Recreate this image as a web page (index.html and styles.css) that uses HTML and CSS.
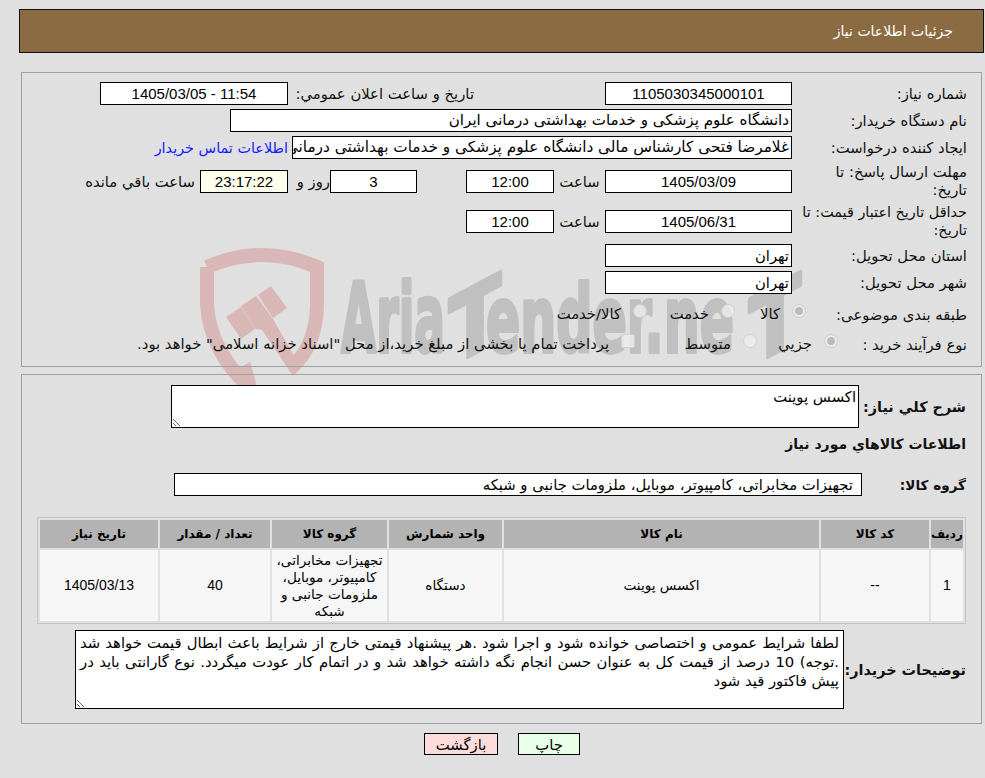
FILE: index.html
```html
<!DOCTYPE html>
<html lang="fa" dir="rtl">
<head>
<meta charset="utf-8">
<title>جزئیات اطلاعات نیاز</title>
<link rel="stylesheet" href="styles.css">
</head>
<body>
<svg class="watermark" width="985" height="400" viewBox="0 0 985 400" aria-hidden="true">
  <g class="wm-red">
    <path class="wm-shield" d="M207 267 Q262 243 317 267 L317 305 Q316 345 293 366"/>
    <path class="wm-shield" d="M207 267 L207 305 Q210 350 248 386"/>
    <polygon points="226,317 241,307 255,329 241,339"/>
    <polygon points="241,306 256,296 273,319 301,368 293,376 262,330 255,329"/>
    <polygon points="258,295 271,286 287,308 273,318"/>
    <polygon points="232,372 250,362 257,386 238,386"/>
  </g>
  <g class="wm-grey">
    <text x="341" y="352" font-size="96" textLength="104" lengthAdjust="spacingAndGlyphs">Aria</text>
    <text font-size="93" textLength="52" lengthAdjust="spacingAndGlyphs" transform="translate(449 367) skewY(-28)">T</text>
    <text x="486" y="352" font-size="92" textLength="248" lengthAdjust="spacingAndGlyphs">ender.ne</text>
    <text font-size="93" textLength="52" lengthAdjust="spacingAndGlyphs" transform="translate(749 367) skewY(-28)">T</text>
  </g>
</svg>

<header class="page-title">جزئیات اطلاعات نیاز</header>

<section class="panel panel-info">
  <div class="row">
    <div class="label">شماره نیاز:</div>
    <div class="field w187 num center">1105030345000101</div>
    <div class="label-inline announce">تاریخ و ساعت اعلان عمومي:</div>
    <div class="field w188 num center ltr">1405/03/05 - 11:54</div>
  </div>
  <div class="row">
    <div class="label">نام دستگاه خریدار:</div>
    <div class="field w562">دانشگاه علوم پزشکی و خدمات بهداشتی درمانی ایران</div>
  </div>
  <div class="row">
    <div class="label">ایجاد کننده درخواست:</div>
    <div class="field w500">غلامرضا فتحی کارشناس مالی دانشگاه علوم پزشکی و خدمات بهداشتی درمانی ایران</div>
    <a class="contact" href="#">اطلاعات تماس خریدار</a>
  </div>
  <div class="row row-tall">
    <div class="label label-two">مهلت ارسال پاسخ: تا<br>تاریخ:</div>
    <div class="field w187 num center">1405/03/09</div>
    <div class="hour-label">ساعت</div>
    <div class="field w88 num center">12:00</div>
    <div class="field w87 num center gap-days">3</div>
    <div class="label-inline days">روز و</div>
    <div class="field w88 num center clock">23:17:22</div>
    <div class="label-inline remain">ساعت باقي مانده</div>
  </div>
  <div class="row row-tall">
    <div class="label label-two label-long">حداقل تاریخ اعتبار قیمت: تا<br>تاریخ:</div>
    <div class="field w187 num center">1405/06/31</div>
    <div class="hour-label">ساعت</div>
    <div class="field w88 num center">12:00</div>
  </div>
  <div class="row row-city">
    <div class="label">استان محل تحویل:</div>
    <div class="field w187">تهران</div>
  </div>
  <div class="row">
    <div class="label">شهر محل تحویل:</div>
    <div class="field w187">تهران</div>
  </div>
  <div class="row row-choice">
    <div class="label">طبقه بندی موضوعی:</div>
    <div class="choices">
      <span class="choice c-goods"><i class="radio on"></i><span>کالا</span></span>
      <span class="choice c-service"><i class="radio"></i><span>خدمت</span></span>
      <span class="choice c-both"><i class="radio"></i><span>کالا/خدمت</span></span>
    </div>
  </div>
  <div class="row row-choice row-process">
    <div class="label">نوع فرآیند خرید :</div>
    <div class="choices">
      <span class="choice c-small"><i class="radio on"></i><span>جزيي</span></span>
      <span class="choice c-mid"><i class="radio"></i><span>متوسط</span></span>
      <span class="choice c-pay"><i class="check"></i><span>پرداخت تمام یا بخشی از مبلغ خرید،از محل "اسناد خزانه اسلامی" خواهد بود.</span></span>
    </div>
  </div>
</section>

<section class="panel panel-need">
  <div class="need-row">
    <div class="strong need-label">شرح کلي نیاز:</div>
    <textarea class="area area-short" readonly>اکسس پوینت</textarea>
  </div>
  <div class="strong goods-title">اطلاعات کالاهاي مورد نیاز</div>
  <div class="need-row group-row">
    <div class="strong group-label">گروه کالا:</div>
    <div class="field group-field">تجهیزات مخابراتی، کامپیوتر، موبایل، ملزومات جانبی و شبکه</div>
  </div>
  <table class="items">
    <colgroup>
      <col class="c1"><col class="c2"><col class="c3"><col class="c4"><col class="c5"><col class="c6"><col class="c7">
    </colgroup>
    <thead>
      <tr><th>ردیف</th><th>کد کالا</th><th>نام کالا</th><th>واحد شمارش</th><th>گروه کالا</th><th>تعداد / مقدار</th><th>تاریخ نیاز</th></tr>
    </thead>
    <tbody>
      <tr>
        <td class="num">1</td>
        <td class="num">--</td>
        <td>اکسس پوینت</td>
        <td>دستگاه</td>
        <td>تجهیزات مخابراتی، کامپیوتر، موبایل، ملزومات جانبی و شبکه</td>
        <td class="num">40</td>
        <td class="num">1405/03/13</td>
      </tr>
    </tbody>
  </table>
  <div class="need-row note-row">
    <div class="strong note-label">توضیحات خریدار:</div>
    <textarea class="area area-note" readonly>لطفا شرایط عمومی و اختصاصی خوانده شود و اجرا شود .هر پیشنهاد قیمتی خارج از شرایط باعث ابطال قیمت خواهد شد .توجه) 10 درصد از قیمت کل به عنوان حسن انجام نگه داشته خواهد شد و در اتمام کار عودت میگردد. نوع گارانتی باید در پیش فاکتور قید شود</textarea>
  </div>
</section>

<div class="actions">
  <button class="btn btn-print" type="button">چاپ</button>
  <button class="btn btn-back" type="button">بازگشت</button>
</div>
</body>
</html>
```

FILE: styles.css
```css
* { box-sizing: border-box; }
html, body { margin: 0; padding: 0; }
body {
  background: #e0e0e0;
  color: #111;
  font-family: "DejaVu Sans", sans-serif;
  font-size: 14.8px;
  height: 778px;
  overflow: hidden;
  position: relative;
}
.watermark { position: absolute; left: 0; top: 0; z-index: -1; direction: ltr; }
.wm-red polygon { fill: #d9b7b7; }
.wm-shield { fill: none; stroke: #d9b7b7; stroke-width: 14; }
.wm-grey text {
  fill: #c0c0c0;
  stroke: #c0c0c0;
  stroke-width: 4;
  stroke-linejoin: round;
  font-family: "DejaVu Sans", sans-serif;
  font-weight: 700;
}

.page-title {
  margin: 9px 1px 0 19px;
  height: 44px;
  background: #8b6c42;
  border: 1px solid #111;
  color: #fff;
  font-size: 14px;
  line-height: 42px;
  padding-right: 30px;
}
.panel { margin: 0 3px 0 21px; border: 1px solid #a0a0a0; }
.panel-info { margin-top: 19px; height: 295px; padding: 9px 14px 0 0; }
.panel-need { margin-top: 7px; height: 350px; padding: 10px 15px 0 0; }

.row { display: flex; align-items: center; height: 23px; margin-bottom: 4px; }
.row-tall { height: 36px; }
.row-city { margin-top: 5px; }
.row-choice { height: 26px; margin-top: 8px; }
.row-process { margin-top: 4px; }
.label { width: 175px; padding-left: 8px; flex: none; line-height: 18px; }
.label-two { white-space: nowrap; }
.label-long { font-size: 14.4px; }

.field {
  background: #fff;
  border: 1px solid #000;
  color: #000;
  height: 23px;
  line-height: 21px;
  padding: 0 2px;
  white-space: nowrap;
  overflow: hidden;
  flex: none;
}
.num { font-family: "Liberation Sans", sans-serif; font-size: 15px; }
.center { text-align: center; }
.ltr { direction: ltr; }
.w187 { width: 187px; }
.w188 { width: 188px; }
.w562 { width: 562px; font-size: 15.1px; }
.w500 { width: 500px; font-size: 15.3px; }
.w88 { width: 88px; }
.w87 { width: 87px; }
.clock { background: #ffffee; }
.label-inline { flex: none; white-space: nowrap; }
.announce { width: 181px; margin: 0 131px 0 5px; }
.hour-label { width: 51px; text-align: center; flex: none; }
.gap-days { margin-right: 49px; }
.days { width: 28px; margin: 0 0 0 14px; }
.remain { margin-right: 5px; }
.contact { color: #1a1aff; text-decoration: none; margin-right: 4px; white-space: nowrap; font-size: 14.4px; }

.choices { position: relative; height: 26px; flex: 1; }
.choice { position: absolute; display: flex; align-items: flex-start; gap: 12px; white-space: nowrap; }
.choice span { padding-top: 3px; }
.c-goods { right: -14px; }
.c-service { right: 57px; }
.c-both { right: 145px; }
.c-small { right: -46px; }
.c-mid { right: 35px; }
.c-pay { right: 157px; }
.radio, .check {
  display: block;
  width: 14px;
  height: 14px;
  flex: none;
  background: rgba(238, 238, 238, .8);
  border: 1px solid #d0d0d0;
}
.radio { border-radius: 50%; margin-top: 2px; }
.radio.on { box-shadow: inset 0 0 0 2px #eee, inset 0 0 0 7px #bbb; }
.check { border-radius: 2px; margin-top: 2px; }

.need-row { display: flex; align-items: center; }
.strong { font-weight: 700; font-size: 14px; white-space: nowrap; }
.need-label { width: 107px; flex: none; padding-left: 4px; font-size: 14.4px; }
.area {
  display: block;
  background: #fff;
  border: 1px solid #000;
  color: #000;
  font-family: "DejaVu Sans", sans-serif;
  font-size: 14.8px;
  margin: 0;
  padding: 2px;
  outline: none;
  flex: none;
}
.area-short { width: 688px; height: 43px; }
.goods-title { margin-top: 6px; height: 30px; line-height: 20px; }
.group-row { margin-top: 9px; height: 23px; }
.group-label { width: 104px; flex: none; font-size: 13.6px; }
.group-field { width: 688px; padding-right: 8px; }

.items {
  margin: 21px 0 0 0;
  width: 927px;
  table-layout: fixed;
  border-collapse: separate;
  border-spacing: 2px;
  border: 1px solid #c4c4c4;
  background: #e0e0e0;
}
.c1 { width: 32px; }
.c2 { width: 108px; }
.c3 { width: 315px; }
.c4 { width: 113px; }
.c5 { width: 115px; }
.c6 { width: 110px; }
.c7 { width: 118px; }
.items th {
  background: #b3b3b3;
  color: #000;
  font-size: 12px;
  font-weight: 700;
  height: 28px;
  padding: 0;
  text-align: center;
}
.items td {
  background: #f6f6f6;
  color: #000;
  font-size: 13.6px;
  height: 71px;
  padding: 0 4px;
  text-align: center;
  line-height: 17px;
}
.items td.num { font-size: 14px; }
.note-row { margin-top: 6px; }
.note-label { width: 122px; flex: none; font-size: 14.4px; }
.area-note { width: 769px; height: 79px; line-height: 19px; text-align: justify; padding: 2px 4px; }

.actions { display: flex; justify-content: center; gap: 20px; margin-top: 9px; padding-left: 19px; }
.btn {
  height: 22px;
  border: 1px solid #000;
  color: #000;
  font-family: "DejaVu Sans", sans-serif;
  font-size: 14.8px;
  padding: 0;
}
.btn-print { width: 62px; background: #e8ffe8; }
.btn-back { width: 74px; background: #ffdcdc; }
```
